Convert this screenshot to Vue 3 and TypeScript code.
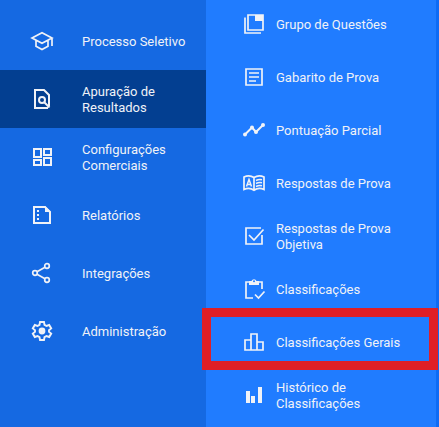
<script setup lang="ts">
interface MenuItem {
  label: string
  icon: string
  marked?: boolean
}

const sections: MenuItem[] = [
  {
    label: 'Processo Seletivo',
    icon: '<path d="M2 9l10-5.3L22 9l-10 5.3zM6 11.4v5.9l6 3.3 6-3.3v-5.9M22 9v8"/>',
  },
  {
    label: 'Apuração de Resultados',
    icon: '<path stroke-width="2" d="M19 19V8l-5-5H5v18h13"/><circle cx="12" cy="13" r="3" stroke-width="2"/><path d="M14 15l5.5 5.5" stroke-width="2"/>',
  },
  {
    label: 'Configurações Comerciais',
    icon: '<path stroke-width="2" d="M4 4h7v8H4zM14 4h7v6h-7zM4 15h7v5H4zM14 13h7v7h-7z"/>',
  },
  {
    label: 'Relatórios',
    icon: '<path stroke-width="2" d="M4 4h11l5 5v11H4z"/><path class="solid" d="M15 3l6 6h-6zM7 7h2v2H7zM7 11h2v2H7zM7 15h2v2H7z"/>',
  },
  {
    label: 'Integrações',
    icon: '<circle cx="17" cy="5" r="2.3"/><circle cx="5" cy="12" r="2.3"/><circle cx="17" cy="19" r="2.3"/><path d="M7 10.8l8-4.6M7 13.2l8 4.6"/>',
  },
  {
    label: 'Administração',
    icon: '<path stroke-width="1.9" d="M10 3h4l.5 2.8 2 1.2 2.7-1 2 3.4-2.2 1.8v1.6l2.2 1.8-2 3.4-2.7-1-2 1.2L14 21h-4l-.5-2.8-2-1.2-2.7 1-2-3.4L5 12.8v-1.6L2.800 9.400l2-3.400 2.700 1 2-1.200z"/><circle class="solid" cx="12" cy="12" r="3.4"/>',
  },
]

const pages: MenuItem[] = [
  {
    label: 'Grupo de Questões',
    icon: '<path d="M6 3h15v15H6zM3 5.5V21h16"/><path class="solid" d="M13 3h8v6h-8z"/>',
  },
  {
    label: 'Gabarito de Prova',
    icon: '<path d="M4 4h16v16H4zM7 8h10M7 12h10M7 16h7"/>',
  },
  {
    label: 'Pontuação Parcial',
    icon: '<path stroke-width="2" d="M3 16.5l7-7 4 4.5 7-7"/><circle class="solid" cx="3" cy="16.5" r="2"/><circle class="solid" cx="10" cy="9.5" r="2"/><circle class="solid" cx="14" cy="14" r="2"/><circle class="solid" cx="21" cy="7" r="2"/>',
  },
  {
    label: 'Respostas de Prova',
    icon: '<path d="M12 6.5C9 4.5 5 4.5 2 6v12.5c3-1.3 7-1.3 10 .7 3-2 7-2 10-.7V6c-3-1.500-7-1.500-10 .5zM12 6.5V19"/><path stroke-width="1.5" d="M4.5 15.5L7 8.5l2.5 7M5.5 13.5h3M14 9.5q3-1.500 6-.7M14 12.500q3-1.500 6-.7M14 15.500q3-1.500 6-.7"/>',
  },
  {
    label: 'Respostas de Prova Objetiva',
    icon: '<path d="M19 4H4v16h16v-9M7 11l5 5L21.5 5.5"/>',
  },
  {
    label: 'Classificações',
    icon: '<path d="M11 21H4V5h16v7M13 17.5l3.5 3.5 6-6.500"/><path class="solid" d="M7 4h2.500a2.700 2.700 0 0 1 5 0H17v4H7z"/><circle class="hole" cx="12" cy="4.2" r="1"/>',
  },
  {
    label: 'Classificações Gerais',
    icon: '<path d="M3 10h6v10H3zM9 4h6v16H9zM15 12h6v8h-6z"/>',
    marked: true,
  },
  {
    label: 'Histórico de Classificações',
    icon: '<path class="solid" d="M4 8h4v12H4zM9 13h4v7H9zM16 4h4v16h-4z"/>',
  },
]

const activeSection = 'Apuração de Resultados'
</script>

<template>
  <div class="menu">
    <nav class="sidebar" aria-label="Seções">
      <a
        v-for="item in sections"
        :key="item.label"
        href="#"
        class="section"
        :class="{ active: item.label === activeSection }"
      >
        <svg class="icon" viewBox="0 0 24 24" aria-hidden="true" v-html="item.icon" />
        <span class="label">{{ item.label }}</span>
      </a>
    </nav>
    <nav class="submenu" aria-label="Páginas">
      <a
        v-for="item in pages"
        :key="item.label"
        href="#"
        class="page"
        :class="{ marked: item.marked }"
      >
        <svg class="icon" viewBox="0 0 24 24" aria-hidden="true" v-html="item.icon" />
        <span class="label">{{ item.label }}</span>
      </a>
    </nav>
  </div>
</template>

<style>
body {
  margin: 0;
  background: #1569e2;
}
</style>

<style scoped>
.menu {
  display: grid;
  grid-template-columns: 206px minmax(0, 1fr);
  min-height: 100vh;
  font: 13px/16px Roboto, "Liberation Sans", sans-serif;
  color: #f0f2f7;
}

.sidebar {
  padding-top: 12px;
  background: #1569e2;
}

.section,
.page {
  display: flex;
  align-items: center;
  box-sizing: border-box;
  color: inherit;
  text-decoration: none;
}

.section {
  gap: 28px;
  height: 58px;
  padding: 0 18px 0 30px;
}

.section.active {
  background: #033f91;
}

.submenu {
  display: flex;
  flex-direction: column;
  gap: 5px;
  border-right: 3px solid #0e6bf4;
  background: #207cff;
}

.page {
  position: relative;
  gap: 10px;
  height: 48px;
  padding: 0 18px 0 36px;
}

.label {
  padding-top: 2px;
}

.page.marked::after {
  content: "";
  position: absolute;
  inset: -10px -2px -4px -4px;
  border: 9px solid #df1f26;
  pointer-events: none;
}

.icon {
  flex: none;
  width: 24px;
  height: 24px;
  fill: none;
  stroke: currentColor;
  stroke-width: 1.7;
}

.icon :deep(.solid) {
  fill: currentColor;
  stroke: none;
}

.icon :deep(.hole) {
  fill: #207cff;
  stroke: none;
}
</style>
